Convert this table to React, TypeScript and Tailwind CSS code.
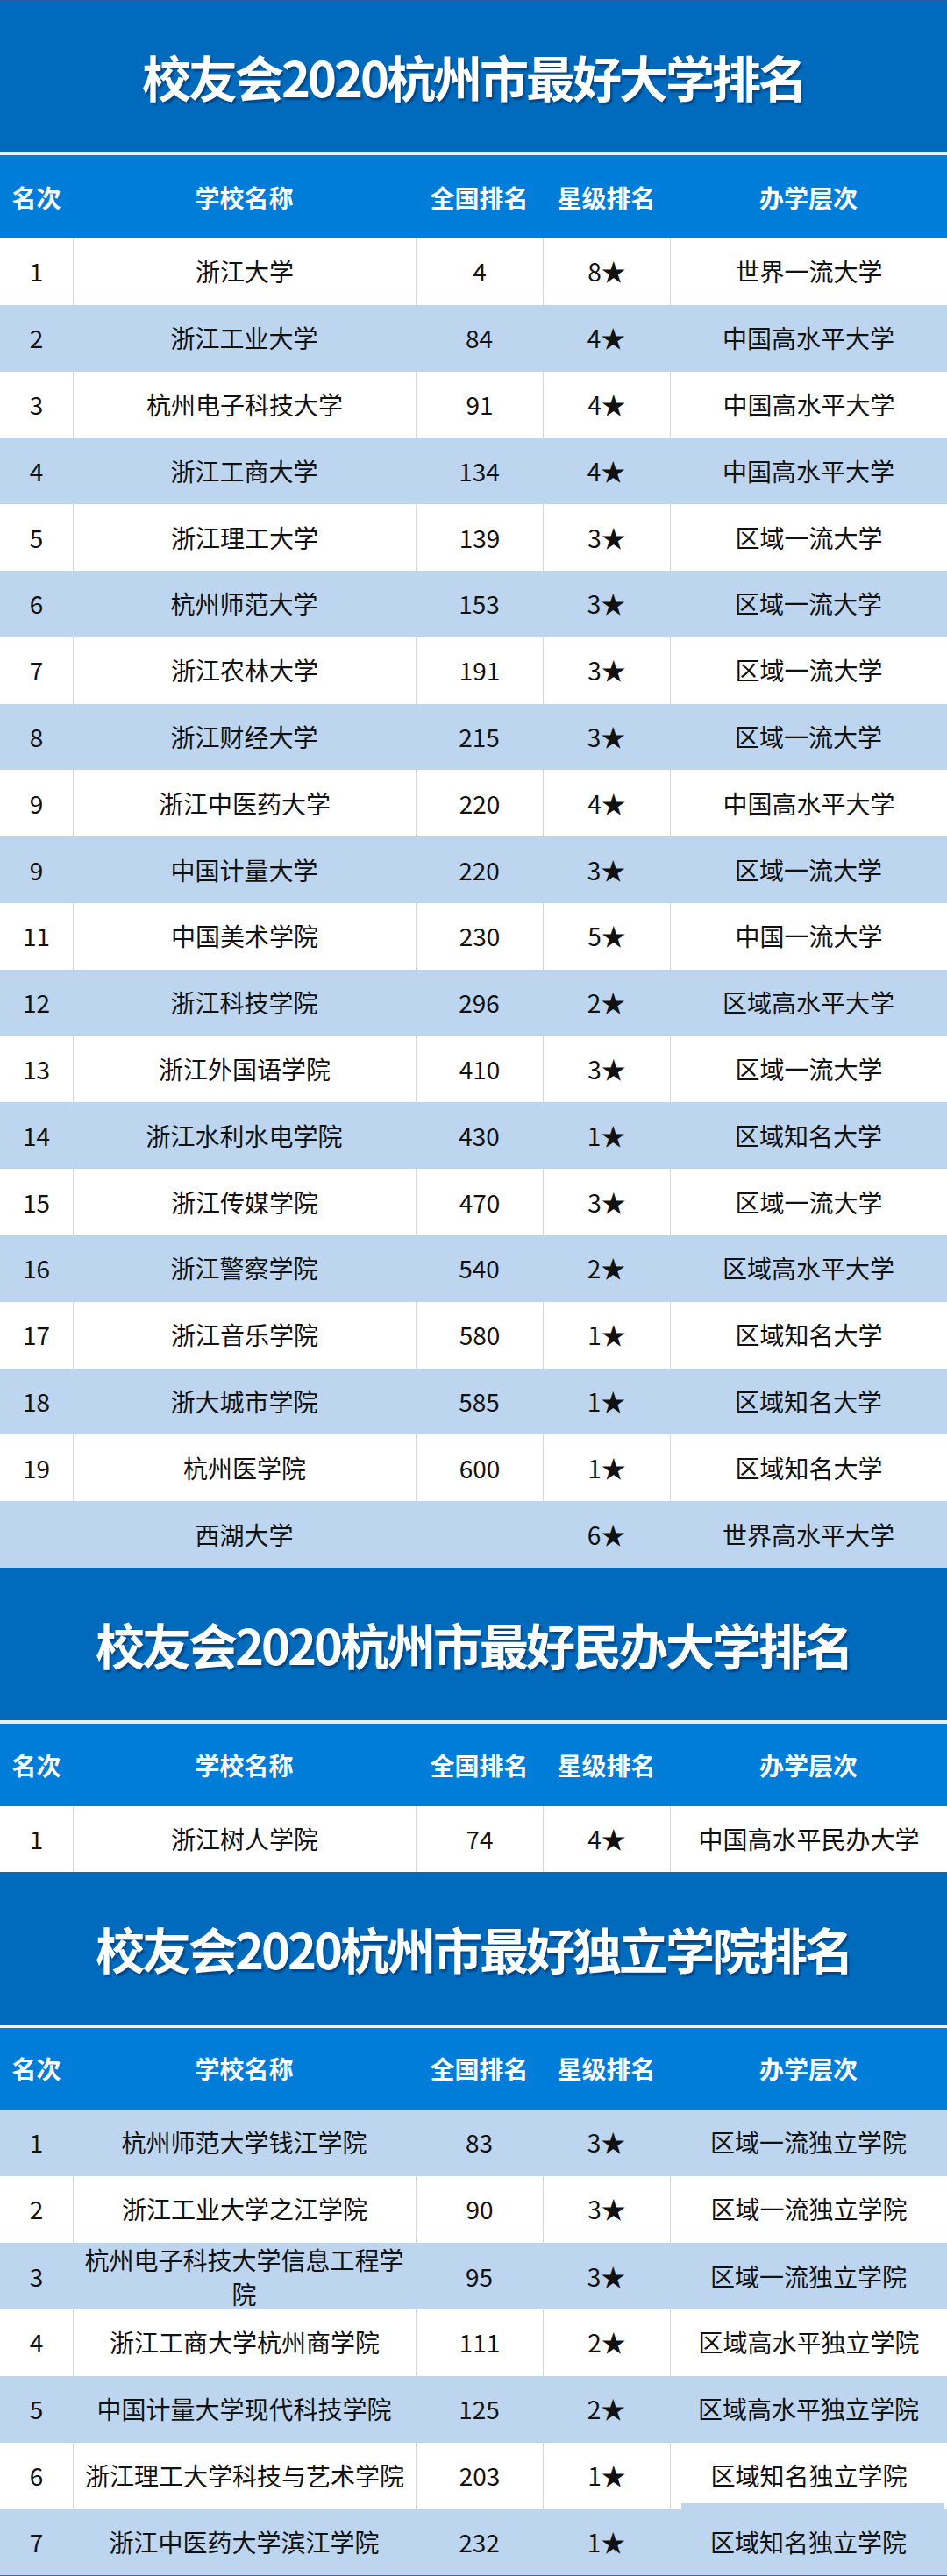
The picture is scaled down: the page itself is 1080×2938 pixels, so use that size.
import React from "react";

type Row = [string, string, string, string, string];

const t1: Row[] = [
  ["1", "浙江大学", "4", "8★", "世界一流大学"],
  ["2", "浙江工业大学", "84", "4★", "中国高水平大学"],
  ["3", "杭州电子科技大学", "91", "4★", "中国高水平大学"],
  ["4", "浙江工商大学", "134", "4★", "中国高水平大学"],
  ["5", "浙江理工大学", "139", "3★", "区域一流大学"],
  ["6", "杭州师范大学", "153", "3★", "区域一流大学"],
  ["7", "浙江农林大学", "191", "3★", "区域一流大学"],
  ["8", "浙江财经大学", "215", "3★", "区域一流大学"],
  ["9", "浙江中医药大学", "220", "4★", "中国高水平大学"],
  ["9", "中国计量大学", "220", "3★", "区域一流大学"],
  ["11", "中国美术学院", "230", "5★", "中国一流大学"],
  ["12", "浙江科技学院", "296", "2★", "区域高水平大学"],
  ["13", "浙江外国语学院", "410", "3★", "区域一流大学"],
  ["14", "浙江水利水电学院", "430", "1★", "区域知名大学"],
  ["15", "浙江传媒学院", "470", "3★", "区域一流大学"],
  ["16", "浙江警察学院", "540", "2★", "区域高水平大学"],
  ["17", "浙江音乐学院", "580", "1★", "区域知名大学"],
  ["18", "浙大城市学院", "585", "1★", "区域知名大学"],
  ["19", "杭州医学院", "600", "1★", "区域知名大学"],
  ["", "西湖大学", "", "6★", "世界高水平大学"],
];

const t2: Row[] = [["1", "浙江树人学院", "74", "4★", "中国高水平民办大学"]];

const t3: Row[] = [
  ["1", "杭州师范大学钱江学院", "83", "3★", "区域一流独立学院"],
  ["2", "浙江工业大学之江学院", "90", "3★", "区域一流独立学院"],
  ["3", "杭州电子科技大学信息工程学院", "95", "3★", "区域一流独立学院"],
  ["4", "浙江工商大学杭州商学院", "111", "2★", "区域高水平独立学院"],
  ["5", "中国计量大学现代科技学院", "125", "2★", "区域高水平独立学院"],
  ["6", "浙江理工大学科技与艺术学院", "203", "1★", "区域知名独立学院"],
  ["7", "浙江中医药大学滨江学院", "232", "1★", "区域知名独立学院"],
];

const font = "font-['Noto_Sans_CJK_SC','Noto_Sans',sans-serif]";
const grid = "grid grid-cols-[83px_391px_145px_145px_316px]";

function Title({ text, h }: { text: string; h: string }) {
  return (
    <div className={`${h} bg-[#006bbd] flex items-center justify-center`}>
      <span className="text-white font-bold text-[56px] leading-none tracking-[-3px] [text-shadow:2px_3px_2px_rgba(0,40,90,0.55)]">
        {text}
      </span>
    </div>
  );
}

function Header({ h }: { h: string }) {
  const cols = ["名次", "学校名称", "全国排名", "星级排名", "办学层次"];
  return (
    <>
      <div className="h-[4px] bg-[#e6f1fb]" />
      <div className={`${grid} ${h} bg-[#007dd9]`}>
        {cols.map((c, i) => (
          <div
            key={i}
            className="flex items-center justify-center text-white font-bold text-[28px] leading-none"
          >
            {c}
          </div>
        ))}
      </div>
    </>
  );
}

function Rows({ rows, h, blueFirst, lastBorder }: { rows: Row[]; h: string; blueFirst: boolean; lastBorder?: boolean }) {
  return (
    <>
      {rows.map((r, i) => {
        const blue = blueFirst ? i % 2 === 0 : i % 2 === 1;
        const last = lastBorder && i === rows.length - 1;
        return (
          <div
            key={i}
            className={`${grid} ${h} ${blue ? "bg-[#bdd5ee]" : "bg-white"} ${last ? "border-b border-[#2f6db0]" : ""}`}
          >
            {r.map((c, j) => (
              <div
                key={j}
                className={`flex items-center justify-center text-center px-[2px] text-[28px] leading-[39px] text-[#111] ${
                  !blue && j > 0 ? "border-l border-[#d6d6d6]" : ""
                }`}
              >
                {c}
              </div>
            ))}
          </div>
        );
      })}
    </>
  );
}

export default function App() {
  return (
    <div className={`w-[1080px] ${font} bg-white relative`}>
      <div className="border-t border-[#24609c]" />
      <Title text="校友会2020杭州市最好大学排名" h="h-[172px]" />
      <Header h="h-[95px]" />
      <Rows rows={t1} h="h-[75.8px]" blueFirst={false} />
      <Title text="校友会2020杭州市最好民办大学排名" h="h-[174px]" />
      <Header h="h-[94px]" />
      <Rows rows={t2} h="h-[75px]" blueFirst={false} />
      <Title text="校友会2020杭州市最好独立学院排名" h="h-[174px]" />
      <Header h="h-[93px]" />
      <Rows rows={t3} h="h-[76px]" blueFirst={true} lastBorder />
      <div className="absolute left-[777px] top-[2855px] w-[300px] h-[7px] bg-[#bdd5ee]" />
    </div>
  );
}
